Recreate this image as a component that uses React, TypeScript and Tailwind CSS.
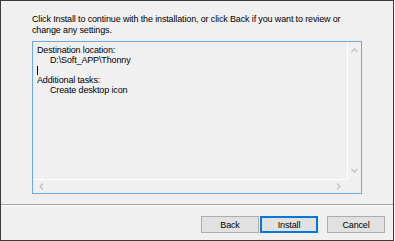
import React from "react";

const font = { fontFamily: '"Liberation Sans", Arial, sans-serif' };

export default function App() {
  return (
    <div className="w-[395px] h-[241px] bg-white">
      <div
        className="w-[394px] h-[241px] border border-[#3c3c3c] bg-[#f0f0f0] flex flex-col text-[9px] leading-[10px] tracking-[-0.14px] text-black"
        style={font}
      >
        <div className="pl-[31px] pt-[13px] leading-[11px]">
          <p>Click Install to continue with the installation, or click Back if you want to review or</p>
          <p>change any settings.</p>
        </div>
        <div className="ml-[31px] mt-[5px] w-[330px] h-[153px] border border-[#6ea8e8] flex flex-col">
          <div className="flex flex-1 min-h-0">
            <div className="flex-1 pl-[4px] pt-[3px]">
              <p>Destination location:</p>
              <p className="pl-[13px]">D:\Soft_APP\Thonny</p>
              <div className="h-[10px] flex items-center">
                <div className="w-px h-[9px] bg-black" />
              </div>
              <p>Additional tasks:</p>
              <p className="pl-[13px]">Create desktop icon</p>
            </div>
            <div className="w-[14px] border-l border-white flex flex-col items-center justify-between py-[6px]">
              <svg width="7" height="5" viewBox="0 0 7 5">
                <path d="M0.5 4 L3.5 1 L6.5 4" fill="none" stroke="#c2c2c2" strokeWidth="1.3" />
              </svg>
              <svg width="7" height="5" viewBox="0 0 7 5">
                <path d="M0.5 1 L3.5 4 L6.5 1" fill="none" stroke="#c2c2c2" strokeWidth="1.3" />
              </svg>
            </div>
          </div>
          <div className="h-[14px] flex">
            <div className="flex-1 border-t border-white flex items-center justify-between px-[6px]">
              <svg width="5" height="7" viewBox="0 0 5 7">
                <path d="M4 0.5 L1 3.5 L4 6.5" fill="none" stroke="#c2c2c2" strokeWidth="1.3" />
              </svg>
              <svg width="5" height="7" viewBox="0 0 5 7">
                <path d="M1 0.5 L4 3.5 L1 6.5" fill="none" stroke="#c2c2c2" strokeWidth="1.3" />
              </svg>
            </div>
            <div className="w-[14px]" />
          </div>
        </div>
        <div className="mt-[10px] h-px bg-[#a0a0a0]" />
        <div className="h-px bg-white" />
        <div className="flex justify-end pr-[8px] mt-[10px]">
          <button className="w-[58px] h-[17px] border border-[#adadad] bg-[#e1e1e1] text-[9px] tracking-[-0.14px]" style={font}>
            Back
          </button>
          <button className="ml-[1px] w-[58px] h-[17px] border-2 border-[#0078d7] bg-[#e1e1e1] text-[9px] tracking-[-0.14px]" style={font}>
            Install
          </button>
          <button className="ml-[9px] w-[58px] h-[17px] border border-[#adadad] bg-[#e1e1e1] text-[9px] tracking-[-0.14px]" style={font}>
            Cancel
          </button>
        </div>
      </div>
    </div>
  );
}
